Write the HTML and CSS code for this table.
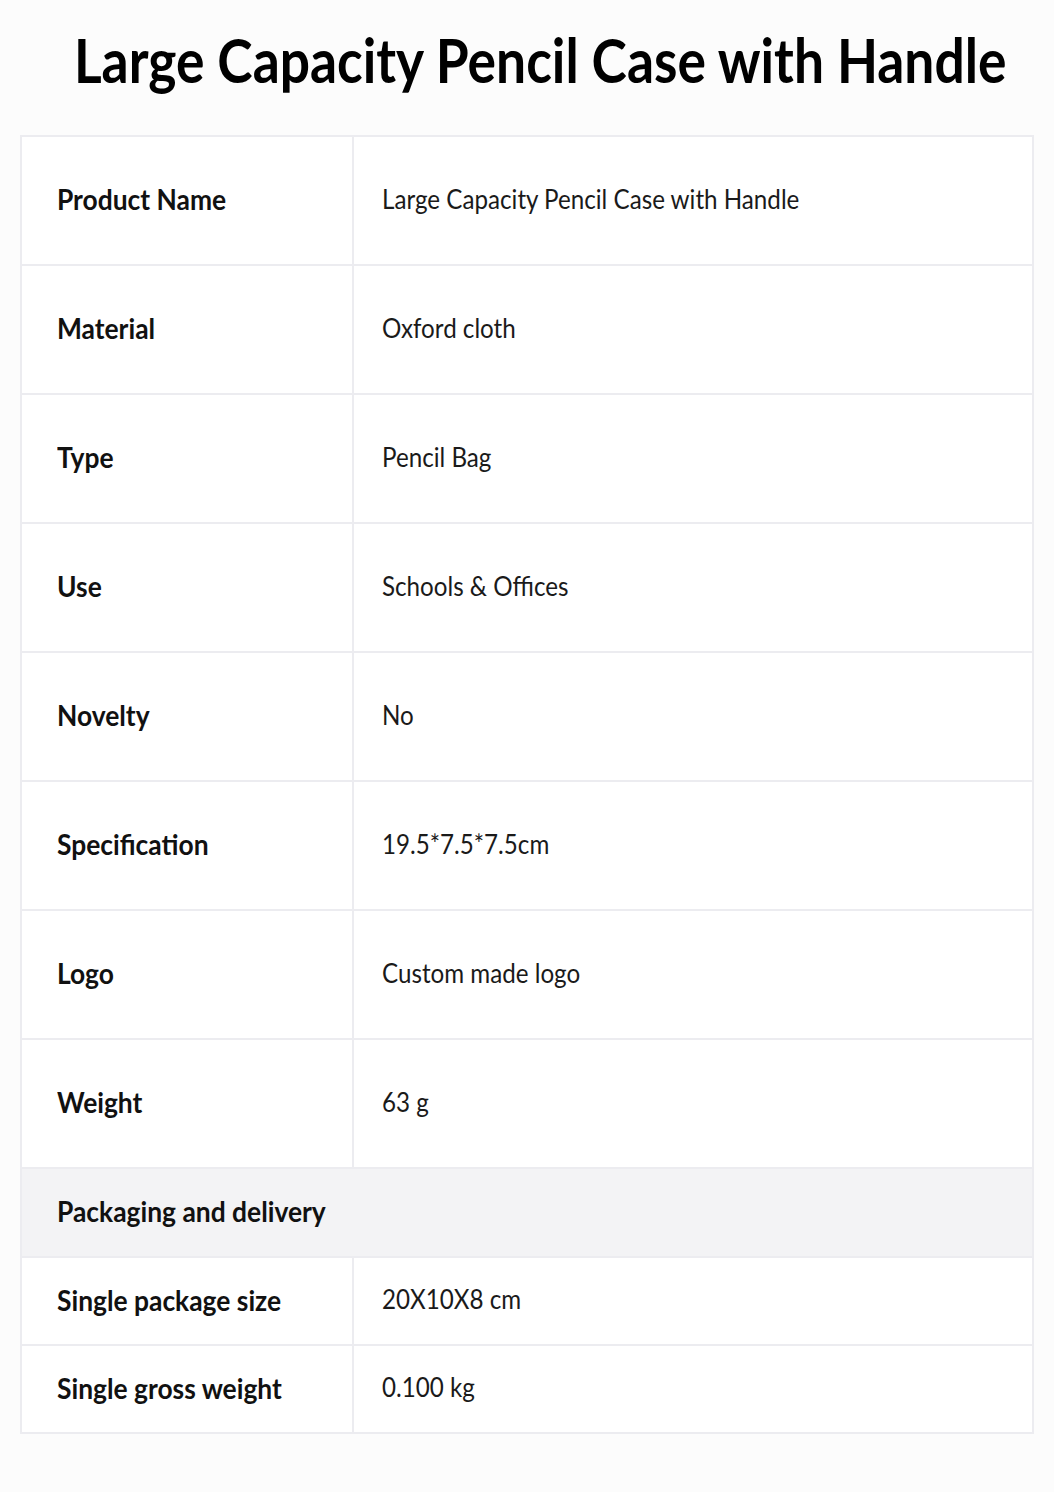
FILE: index.html
```html
<!DOCTYPE html>
<html lang="en">

<head>
    <meta charset="UTF-8">
    <meta name="viewport" content="width=device-width, initial-scale=1.0">
    <title>Large Capacity Pencil Case with Handle</title>
    <link rel="stylesheet" href="styles.css">
</head>

<body>
    <div class="page">
        <h1 class="title"><span>Large Capacity Pencil Case with Handle</span></h1>

        <table class="specs">
            <tr class="row">
                <th><span>Product Name</span></th>
                <td><span>Large Capacity Pencil Case with Handle</span></td>
            </tr>
            <tr class="row">
                <th><span>Material</span></th>
                <td><span>Oxford cloth</span></td>
            </tr>
            <tr class="row">
                <th><span>Type</span></th>
                <td><span>Pencil Bag</span></td>
            </tr>
            <tr class="row">
                <th><span>Use</span></th>
                <td><span>Schools &amp; Offices</span></td>
            </tr>
            <tr class="row">
                <th><span>Novelty</span></th>
                <td><span>No</span></td>
            </tr>
            <tr class="row">
                <th><span>Specification</span></th>
                <td><span>19.5*7.5*7.5cm</span></td>
            </tr>
            <tr class="row">
                <th><span>Logo</span></th>
                <td><span>Custom made logo</span></td>
            </tr>
            <tr class="row">
                <th><span>Weight</span></th>
                <td><span>63 g</span></td>
            </tr>
            <tr class="section">
                <th colspan="2"><span>Packaging and delivery</span></th>
            </tr>
            <tr class="row small">
                <th><span>Single package size</span></th>
                <td><span>20X10X8 cm</span></td>
            </tr>
            <tr class="row small">
                <th><span>Single gross weight</span></th>
                <td><span>0.100 kg</span></td>
            </tr>
        </table>
    </div>
</body>

</html>
```

FILE: styles.css
```css
* {
    margin: 0;
    padding: 0;
    box-sizing: border-box;
}

body {
    background-color: #fcfcfc;
    font-family: Lato, "Noto Sans", sans-serif;
    color: #111;
}

.page {
    padding: 11px 20px 56px;
}

/* the source text is set in a narrow face, so squeeze Lato a little */
.title {
    display: flex;
    justify-content: center;
    font-size: 62px;
    font-weight: 700;
    line-height: 96px;
    padding-left: 26px;
    margin-bottom: 28px;
    white-space: nowrap;
    color: #000;
}

.title span {
    flex: none;
    transform: scaleX(0.86);
}

.specs {
    width: 100%;
    border-collapse: collapse;
    background-color: #fff;
}

.specs th,
.specs td {
    border: 2px solid #ececf0;
    text-align: left;
    vertical-align: middle;
    white-space: nowrap;
}

.specs span {
    display: inline-block;
    transform-origin: left center;
    position: relative;
    top: -2px;
}

.row th {
    width: 332px;
    height: 129px;
    padding-left: 35px;
    font-size: 29px;
    font-weight: 700;
}

.row th span,
.section th span {
    transform: scaleX(0.91);
}

.row td {
    padding-left: 28px;
    font-size: 26px;
    font-weight: 400;
    color: #1a1a1a;
}

.row td span {
    transform: scaleX(0.93);
}

.row.small th {
    height: 88px;
}

.section th {
    height: 89px;
    padding-left: 35px;
    background-color: #f3f3f5;
    font-size: 29px;
    font-weight: 700;
}
```
